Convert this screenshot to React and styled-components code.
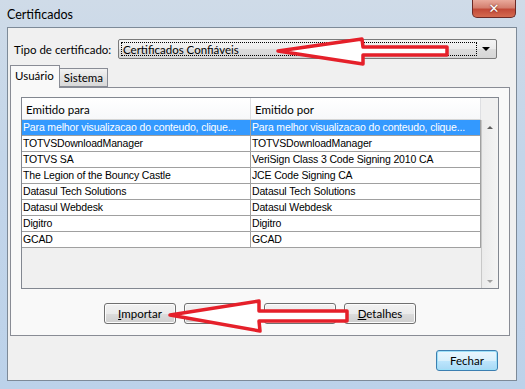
import React from "react";
import styled, { createGlobalStyle } from "styled-components";

const GlobalStyle = createGlobalStyle`
  html, body {
    margin: 0;
    padding: 0;
  }
  body {
    width: 525px;
    height: 389px;
    overflow: hidden;
    font-family: "Lato", "Liberation Sans", sans-serif;
  }
`;

const Window = styled.div`
  position: relative;
  width: 525px;
  height: 389px;
  box-sizing: border-box;
  padding: 0 8px 8px 7px;
  display: flex;
  flex-direction: column;
  background: linear-gradient(180deg, #cfdbe8 0%, #c3d5e9 40%, #bcd2ea 100%);
  overflow: hidden;
`;

const TitleBar = styled.div`
  height: 27px;
  display: flex;
  align-items: flex-start;
`;

const Title = styled.span`
  margin-top: 7px;
  font-size: 12.5px;
  color: #000;
`;

const CloseButton = styled.div`
  margin-left: auto;
  margin-right: 1px;
  width: 44px;
  height: 18px;
  box-sizing: border-box;
  border: 1px solid #6b2a26;
  border-top: none;
  border-radius: 0 0 5px 5px;
  background: linear-gradient(180deg, #e9a99b 0%, #d47f6f 45%, #c24a38 55%, #d46a50 100%);
  display: flex;
  align-items: center;
  justify-content: center;
  color: #fff;
  font: bold 13px "DejaVu Sans", sans-serif;
  text-shadow: 0 0 2px #5a1a12;
`;

const Client = styled.div`
  flex: 1;
  display: flex;
  flex-direction: column;
  border: 1px solid #7d8a98;
  background: #f0f0f0;
`;

const TypeRow = styled.div`
  display: flex;
  align-items: center;
  margin-top: 11px;
  padding-left: 6px;
  height: 20px;
`;

const Label = styled.span`
  width: 104px;
  font-size: 11.5px;
  color: #000;
`;

const Combo = styled.div`
  width: 379px;
  height: 20px;
  box-sizing: border-box;
  border: 1px solid #7a7a7a;
  border-radius: 2px;
  background: linear-gradient(180deg, #f4f4f4 0%, #ebebeb 50%, #dddddd 51%, #d6d6d6 100%);
  display: flex;
  align-items: stretch;
  padding: 2px;
`;

const FocusBox = styled.div`
  flex: 1;
  border: 1px dotted #000;
  font-size: 11.5px;
  line-height: 13px;
  padding-left: 1px;
`;

const ComboArrow = styled.div`
  width: 17px;
  display: flex;
  align-items: center;
  justify-content: center;
  &::after {
    content: "";
    border-left: 4px solid transparent;
    border-right: 4px solid transparent;
    border-top: 4px solid #000;
  }
`;

const TabStrip = styled.div`
  display: flex;
  align-items: flex-end;
  margin-top: 6px;
  padding-left: 2px;
  margin-bottom: -1px;
  position: relative;
  z-index: 1;
`;

const Tab = styled.div`
  box-sizing: border-box;
  height: ${(p) => (p.$active ? "23px" : "19px")};
  padding: ${(p) => (p.$active ? "3px 5px 0 4px" : "2px 4px 0 4px")};
  border: 1px solid #898c95;
  border-bottom: ${(p) => (p.$active ? "none" : "1px solid #898c95")};
  margin-left: ${(p) => (p.$active ? "0" : "-1px")};
  background: ${(p) =>
    p.$active ? "#f9f9f9" : "linear-gradient(180deg, #f2f2f2 0%, #e3e3e3 50%, #d9d9d9 100%)"};
  font-size: 11.5px;
  color: #000;
  margin-bottom: ${(p) => (p.$active ? "0" : "1px")};
`;

const Panel = styled.div`
  margin-left: 2px;
  width: 500px;
  height: 249px;
  box-sizing: border-box;
  border: 1px solid #898c95;
  background: #f9f9f9;
  padding: 9px 10px 0 10px;
  display: flex;
  flex-direction: column;
`;

const ListBox = styled.div`
  height: 192px;
  box-sizing: border-box;
  border: 1px solid #828790;
  background: #f0f0f0;
  display: grid;
  grid-template-columns: 459px 1fr;
  grid-template-rows: 22px 1fr;
`;

const HeaderRow = styled.div`
  display: grid;
  grid-template-columns: 229px 230px;
  background: linear-gradient(180deg, #ffffff 0%, #f7f8fa 100%);
  border-bottom: 1px solid #d5d5d5;
  box-sizing: border-box;
`;

const HeaderCell = styled.div`
  padding: 5px 0 0 4px;
  font-size: 11.5px;
  color: #000;
  border-right: 1px solid #dedfe2;
`;

const Corner = styled.div`
  background: #f0f0f0;
`;

const Rows = styled.div`
  display: flex;
  flex-direction: column;
`;

const Row = styled.div`
  display: grid;
  grid-template-columns: 229px 230px;
  height: 16px;
  box-sizing: border-box;
  border-bottom: 1px solid #a0a0a0;
  background: ${(p) => (p.$selected ? "#3399ff" : "#fff")};
  color: ${(p) => (p.$selected ? "#fff" : "#000")};
`;

const Cell = styled.div`
  padding-left: 1px;
  font-family: "Liberation Sans", sans-serif;
  font-size: 10.5px;
  letter-spacing: -0.15px;
  line-height: 15px;
  white-space: nowrap;
  overflow: hidden;
  border-right: 1px solid #a0a0a0;
`;

const ScrollBar = styled.div`
  border-left: 1px solid #c8c8c8;
  background: linear-gradient(90deg, #ebebeb 0%, #f4f4f4 100%);
  display: flex;
  flex-direction: column;
  justify-content: space-between;
  align-items: center;
  padding: 6px 0 5px;
`;

const ScrollArrow = styled.div`
  width: 0;
  height: 0;
  border-left: 3px solid transparent;
  border-right: 3px solid transparent;
  ${(p) =>
    p.$up ? "border-bottom: 3px solid #606060;" : "border-top: 3px solid #a0a0a0;"}
`;

const ButtonRow = styled.div`
  display: flex;
  justify-content: center;
  gap: 8px;
  margin-top: 14px;
`;

const Button = styled.div`
  width: ${(p) => p.$width || 72}px;
  height: 21px;
  box-sizing: border-box;
  border: 1px solid ${(p) => (p.$default ? "#3c7fb1" : "#707070")};
  border-radius: 3px;
  background: ${(p) =>
    p.$default
      ? "linear-gradient(180deg, #eaf6fd 0%, #d9f0fc 50%, #bee6fd 51%, #a7d9f5 100%)"
      : "linear-gradient(180deg, #f2f2f2 0%, #ebebeb 50%, #dddddd 51%, #cfcfcf 100%)"};
  box-shadow: inset 0 0 0 1px ${(p) => (p.$default ? "#9ee0f8" : "#fcfcfc")};
  display: flex;
  align-items: center;
  justify-content: center;
  font-size: 11.5px;
  color: #000;
  u {
    text-decoration: underline;
  }
`;

const Footer = styled.div`
  display: flex;
  justify-content: flex-end;
  margin-top: 14px;
  padding-right: 18px;
`;

const Overlay = styled.svg`
  position: absolute;
  left: 0;
  top: 0;
  pointer-events: none;
`;

const certs = [
  ["Para melhor visualizacao do conteudo, clique...", "Para melhor visualizacao do conteudo, clique..."],
  ["TOTVSDownloadManager", "TOTVSDownloadManager"],
  ["TOTVS SA", "VeriSign Class 3 Code Signing 2010 CA"],
  ["The Legion of the Bouncy Castle", "JCE Code Signing CA"],
  ["Datasul Tech Solutions", "Datasul Tech Solutions"],
  ["Datasul Webdesk", "Datasul Webdesk"],
  ["Digitro", "Digitro"],
  ["GCAD", "GCAD"],
];

function App() {
  return (
    <>
      <GlobalStyle />
      <Window>
        <TitleBar>
          <Title>Certificados</Title>
          <CloseButton>✕</CloseButton>
        </TitleBar>
        <Client>
          <TypeRow>
            <Label>Tipo de certificado:</Label>
            <Combo>
              <FocusBox>Certificados Confiáveis</FocusBox>
              <ComboArrow />
            </Combo>
          </TypeRow>
          <TabStrip>
            <Tab $active>Usuário</Tab>
            <Tab>Sistema</Tab>
          </TabStrip>
          <Panel>
            <ListBox>
              <HeaderRow>
                <HeaderCell>Emitido para</HeaderCell>
                <HeaderCell>Emitido por</HeaderCell>
              </HeaderRow>
              <Corner />
              <Rows>
                {certs.map((c, i) => (
                  <Row key={i} $selected={i === 0}>
                    <Cell>{c[0]}</Cell>
                    <Cell>{c[1]}</Cell>
                  </Row>
                ))}
              </Rows>
              <ScrollBar>
                <ScrollArrow $up />
                <ScrollArrow />
              </ScrollBar>
            </ListBox>
            <ButtonRow>
              <Button>
                <span>
                  <u>I</u>mportar
                </span>
              </Button>
              <Button>
                <span>
                  <u>E</u>xportar
                </span>
              </Button>
              <Button>
                <span>
                  <u>R</u>emover
                </span>
              </Button>
              <Button>
                <span>
                  <u>D</u>etalhes
                </span>
              </Button>
            </ButtonRow>
          </Panel>
          <Footer>
            <Button $default $width={62}>
              Fechar
            </Button>
          </Footer>
        </Client>
        <Overlay width="525" height="389" viewBox="0 0 525 389">
          <polygon
            points="278,51 362,39 363,47 447,47 447,55 363,55 363,64"
            fill="#fff"
            stroke="#e5202a"
            strokeWidth="3.5"
            strokeLinejoin="round"
          />
          <polygon
            points="170,315 259,301 259,311 347,311 347,321 259,321 260,331"
            fill="#fff"
            stroke="#e5202a"
            strokeWidth="3.5"
            strokeLinejoin="round"
          />
        </Overlay>
      </Window>
    </>
  );
}

export default App;
